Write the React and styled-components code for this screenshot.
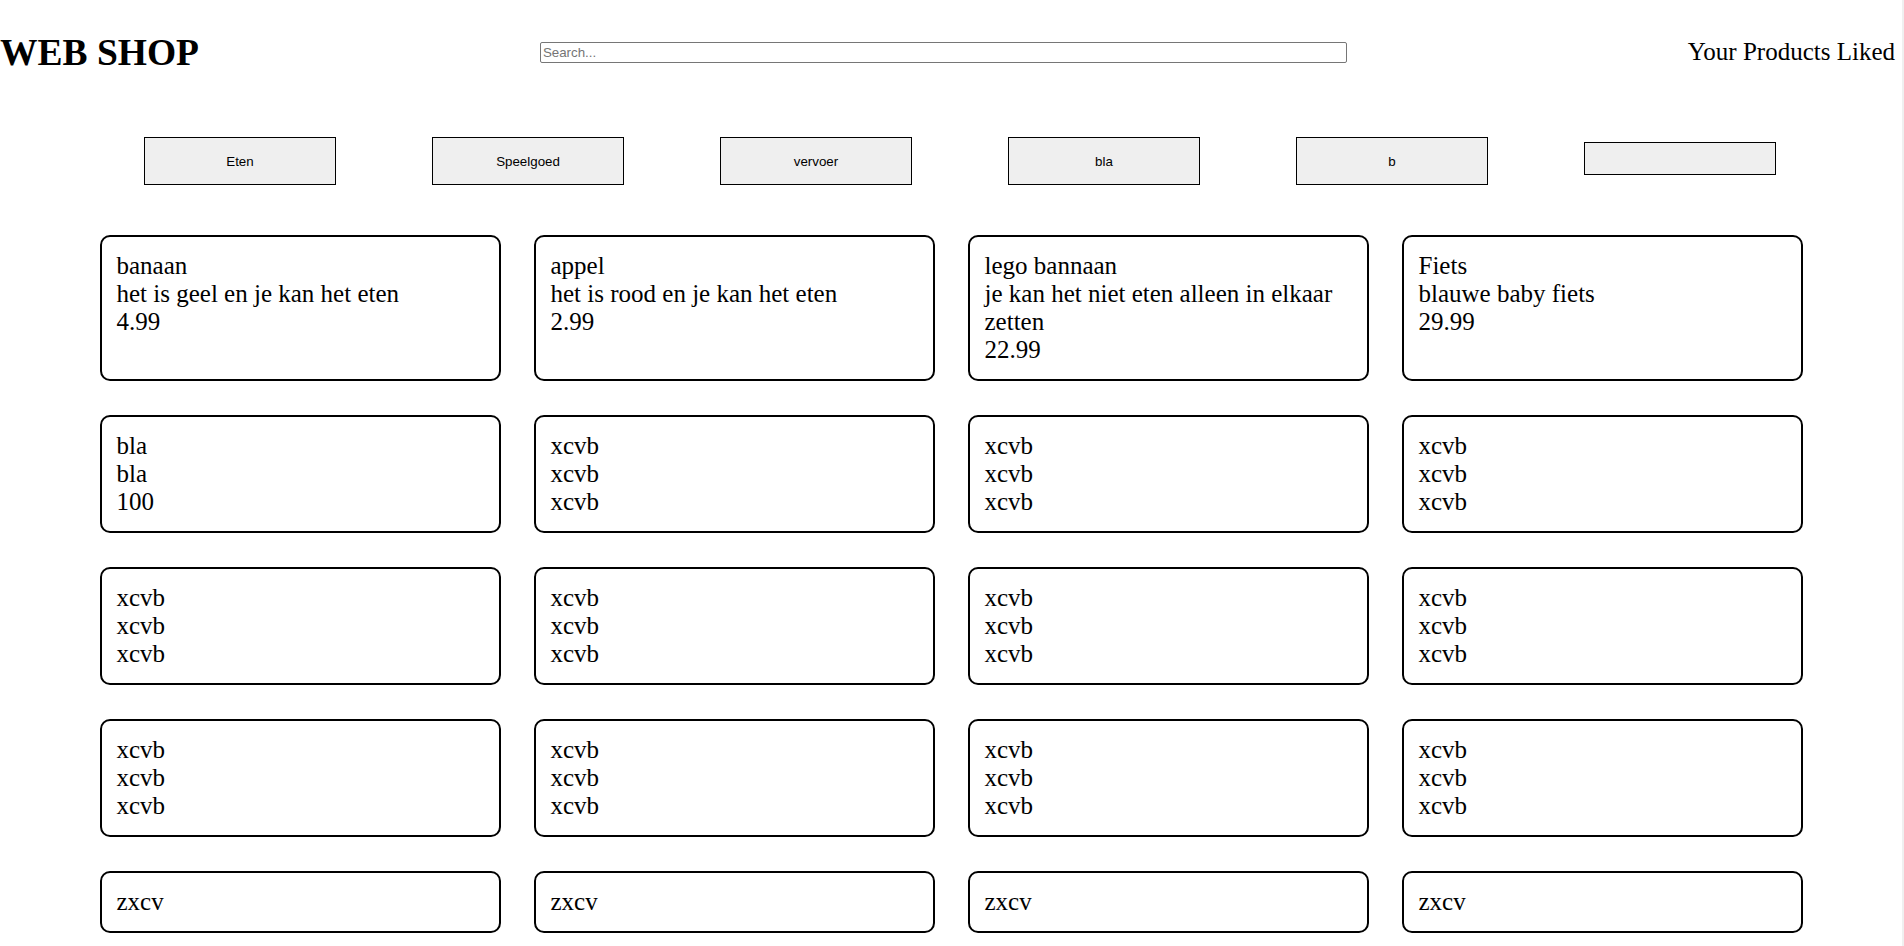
import React from 'react'
import styled, { createGlobalStyle } from 'styled-components'

const serif = `'Liberation Serif', 'Times New Roman', Times, serif`
const sans = `'Liberation Sans', Arial, Helvetica, sans-serif`

const GlobalStyle = createGlobalStyle`
  html,
  body {
    margin: 0;
    padding: 0;
    background: #fff;
  }

  body {
    font-family: ${serif};
    color: #000;
  }
`

const Page = styled.div`
  min-height: 946px;
  border-right: 2px solid #f0f0f0;
  padding-bottom: 40px;
`

const Header = styled.header`
  display: flex;
  justify-content: space-between;
  align-items: center;
  height: 104px;
  padding-right: 7px;
`

const Logo = styled.h1`
  margin: 0;
  font-size: 37.5px;
  font-weight: bold;
`

const Search = styled.input`
  width: 807px;
  box-sizing: border-box;
  height: 21px;
  padding: 1px 2px;
  border: 1px solid #767676;
  border-radius: 2px;
  font-family: ${sans};
  font-size: 13.33px;

  &::placeholder {
    color: #757575;
  }
`

const Liked = styled.div`
  font-size: 25px;
`

const Categories = styled.nav`
  display: grid;
  grid-template-columns: repeat(6, 288px);
  align-items: center;
  justify-items: center;
  padding: 0 96px;
  margin-top: 33px;
  height: 48px;
`

const CategoryButton = styled.button`
  width: 192px;
  padding: 15.5px 0;
  background: #efefef;
  border: 1px solid #000;
  font-family: ${sans};
  font-size: 13.33px;
  line-height: 15px;
  color: #000;
  cursor: pointer;
  margin-bottom: ${(props) => (props.$empty ? '5px' : '0')};
`

const Grid = styled.main`
  display: grid;
  grid-template-columns: repeat(4, 401px);
  column-gap: 33px;
  row-gap: 34px;
  justify-content: center;
  margin-top: 50px;
`

const Card = styled.div`
  border: 2px solid #000;
  border-radius: 10px;
  padding: 15px;
  font-size: 25px;
  line-height: 28px;
`

const Line = styled.div``

const categories = ['Eten', 'Speelgoed', 'vervoer', 'bla', 'b', '']

const x = ['xcvb', 'xcvb', 'xcvb']

const products = [
  ['banaan', 'het is geel en je kan het eten', '4.99'],
  ['appel', 'het is rood en je kan het eten', '2.99'],
  ['lego bannaan', 'je kan het niet eten alleen in elkaar zetten', '22.99'],
  ['Fiets', 'blauwe baby fiets', '29.99'],
  ['bla', 'bla', '100'],
  x, x, x,
  x, x, x, x,
  x, x, x, x,
  ['zxcv'], ['zxcv'], ['zxcv'], ['zxcv'],
]

const App = () => (
  <Page>
    <GlobalStyle />
    <Header>
      <Logo>WEB SHOP</Logo>
      <Search placeholder="Search..." />
      <Liked>Your Products Liked</Liked>
    </Header>
    <Categories>
      {categories.map((c, i) => (
        <CategoryButton key={i} $empty={!c}>
          {c}
        </CategoryButton>
      ))}
    </Categories>
    <Grid>
      {products.map((p, i) => (
        <Card key={i}>
          {p.map((line, j) => (
            <Line key={j}>{line}</Line>
          ))}
        </Card>
      ))}
    </Grid>
  </Page>
)

export default App
